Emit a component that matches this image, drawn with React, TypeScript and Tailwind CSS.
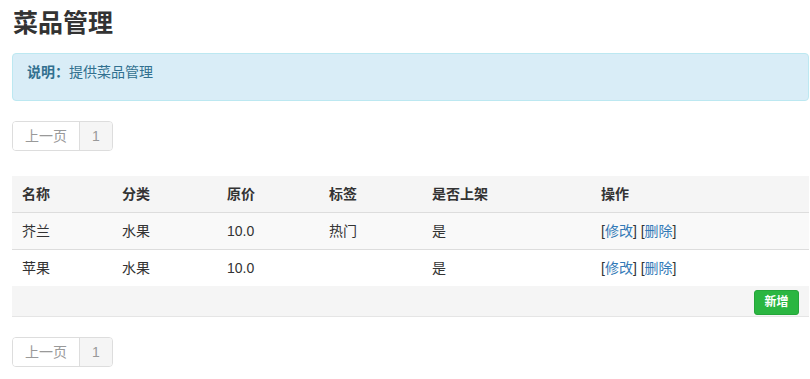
import React from "react";

const font = {
  fontFamily:
    '"Helvetica Neue", "Liberation Sans", "Noto Sans CJK SC", sans-serif',
};

const cols = "grid grid-cols-[100px_105px_102px_103px_169px_1fr]";

function Pager() {
  return (
    <div className="flex">
      <div className="flex h-[30px] rounded-[4px] border border-[#dddddd] text-[14px] leading-[20px] text-[#999999] overflow-hidden">
        <span className="flex items-center px-[12px] bg-white">上一页</span>
        <span className="flex items-center px-[12px] border-l border-[#dddddd] bg-[#f5f5f5]">1</span>
      </div>
    </div>
  );
}

const rows = [
  { name: "芥兰", cat: "水果", price: "10.0", tag: "热门", on: "是", bg: "bg-[#f9f9f9]" },
  { name: "苹果", cat: "水果", price: "10.0", tag: "", on: "是", bg: "bg-white" },
];

export default function App() {
  return (
    <div className="w-[810px] min-h-[379px] bg-white pl-[12px] pr-[1px] pt-[10px] text-[#333333]" style={font}>
      <h1 className="text-[25px] leading-[26px] font-bold pl-[1px]">菜品管理</h1>
      <div className="mt-[17px] h-[48px] rounded-[4px] border border-[#bce8f1] bg-[#d9edf7] pl-[14px] pt-[8px] text-[14px] leading-[20px] text-[#31708f]">
        <span className="font-bold">说明：</span>提供菜品管理
      </div>
      <div className="mt-[20px]">
        <Pager />
      </div>
      <div className="mt-[25px] text-[14px] leading-[20px]">
        <div className={`${cols} bg-[#f5f5f5] border-b border-[#dddddd] font-bold`}>
          {["名称", "分类", "原价", "标签", "是否上架", "操作"].map((h) => (
            <div key={h} className="px-[10px] py-[8px]">{h}</div>
          ))}
        </div>
        {rows.map((r, i) => (
          <div key={i} className={`${cols} ${r.bg} ${i === 0 ? "border-b border-[#dddddd]" : ""}`}>
            <div className="px-[10px] py-[8px]">{r.name}</div>
            <div className="px-[10px] py-[8px]">{r.cat}</div>
            <div className="px-[10px] py-[8px]">{r.price}</div>
            <div className="px-[10px] py-[8px]">{r.tag}</div>
            <div className="px-[10px] py-[8px]">{r.on}</div>
            <div className="px-[10px] py-[8px]">
              [<a className="text-[#337ab7]">修改</a>] [<a className="text-[#337ab7]">删除</a>]
            </div>
          </div>
        ))}
        <div className="flex justify-end bg-[#f5f5f5] border-b border-[#e5e5e5] h-[31px] pt-[4px] pr-[10px]">
          <button className="h-[25px] w-[45px] rounded-[3px] bg-[#2bb641] border border-[#25a53a] text-white text-[12px] font-bold leading-[23px]">
            新增
          </button>
        </div>
      </div>
      <div className="mt-[20px]">
        <Pager />
      </div>
    </div>
  );
}
